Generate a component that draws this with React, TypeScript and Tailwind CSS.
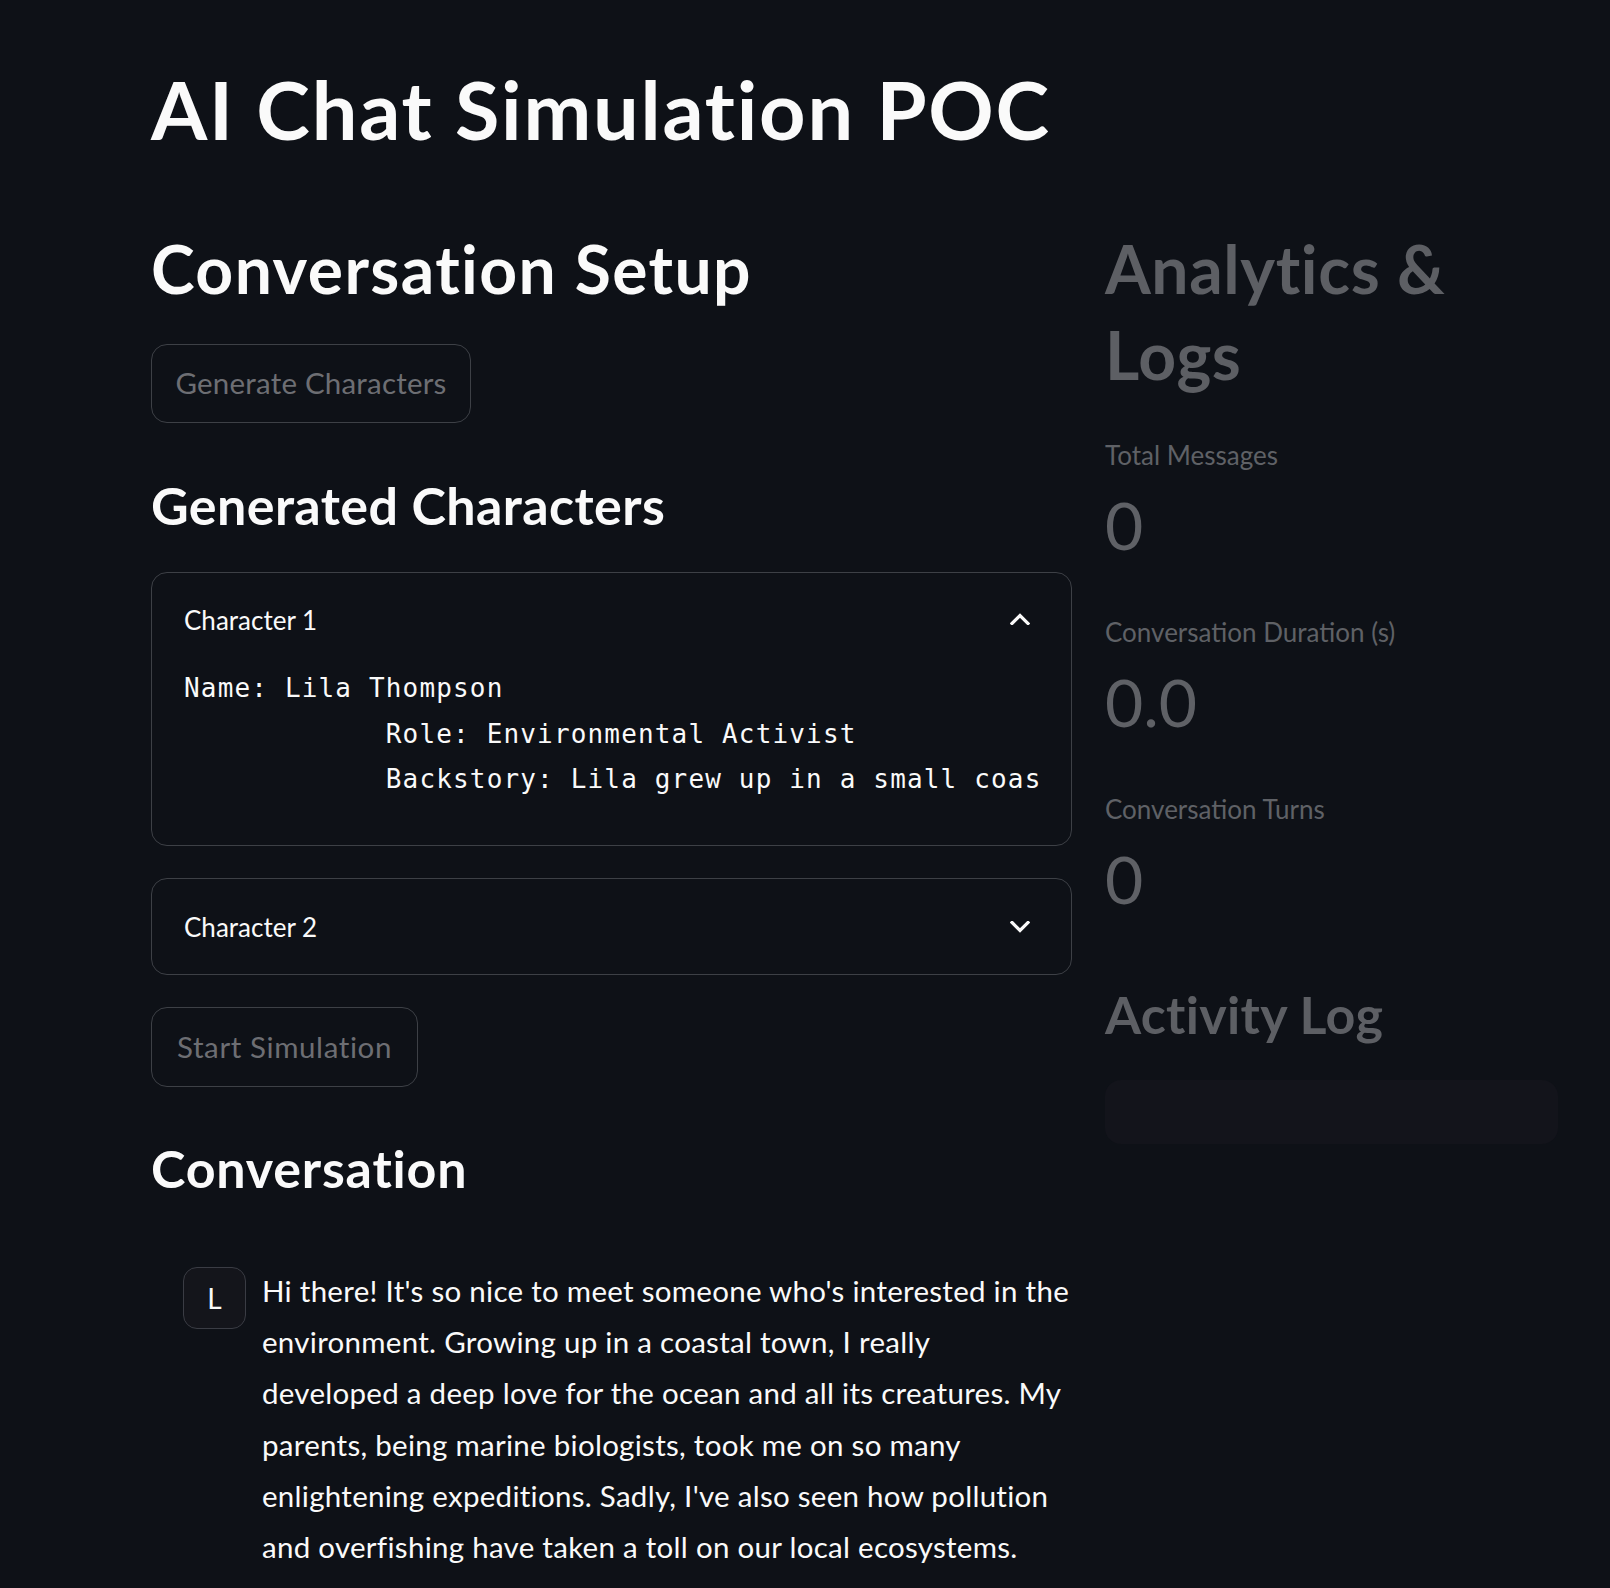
import React from "react";

const Chevron = ({ up }: { up: boolean }) => (
  <svg width="20" height="12" viewBox="0 0 20 12" fill="none" className="block">
    {up ? (
      <path d="M2 10.5 L10 2.5 L18 10.5" stroke="#fafafa" strokeWidth="3.2" strokeLinecap="square" strokeLinejoin="miter" />
    ) : (
      <path d="M2 1.5 L10 9.5 L18 1.5" stroke="#fafafa" strokeWidth="3.2" strokeLinecap="square" strokeLinejoin="miter" />
    )}
  </svg>
);

const chatLines = [
  "Hi there! It's so nice to meet someone who's interested in the",
  "environment. Growing up in a coastal town, I really",
  "developed a deep love for the ocean and all its creatures. My",
  "parents, being marine biologists, took me on so many",
  "enlightening expeditions. Sadly, I've also seen how pollution",
  "and overfishing have taken a toll on our local ecosystems.",
];

const Metric = ({ label, value, first }: { label: string; value: string; first?: boolean }) => (
  <div className={first ? "mt-[37px]" : "mt-[47px]"}>
    <div className="text-[26px] leading-[40px] text-[#5f6166]">{label}</div>
    <div className="mt-[10px] text-[66px] leading-[80px] text-[#5f6166]">{value}</div>
  </div>
);

export default function App() {
  return (
    <div className="h-[1588px] overflow-hidden bg-[#0e1117] font-['Lato',sans-serif] text-[#fafafa]">
      <div className="w-[1558px] pl-[151px] pt-[59px]">
        <h1 className="text-[81px] font-bold leading-[100px] tracking-[1.8px]">AI Chat Simulation POC</h1>
        <div className="mt-[67px] flex gap-[33px]">
          {/* Left column */}
          <div className="w-[921px] shrink-0">
            <h2 className="text-[66px] font-bold leading-[86px] tracking-[1.4px]">Conversation Setup</h2>
            <button className="mt-[32px] flex h-[79px] w-[320px] items-center justify-center rounded-[16px] border border-[#3d4046] text-[29.5px] tracking-[0.2px] text-[#6d6e73]">
              Generate Characters
            </button>
            <h3 className="mt-[48px] text-[52px] font-bold leading-[68px] tracking-[0.4px]">Generated Characters</h3>

            <div className="mt-[33px] h-[274px] rounded-[16px] border border-[#3d4046]">
              <div className="flex h-[92px] items-center justify-between pl-[32px] pr-[41px]">
                <span className="mt-[1px] text-[26px] leading-[40px]">Character 1</span>
                <Chevron up />
              </div>
              <div className="px-[32px]">
                <div className="mt-[1px] overflow-hidden whitespace-pre font-['DejaVu_Sans_Mono',monospace] text-[26px] leading-[45.5px] tracking-[1.16px]">
                  {"Name: Lila Thompson\n            Role: Environmental Activist\n            Backstory: Lila grew up in a small coastal town where her parents worked as marine biologists."}
                </div>
              </div>
            </div>

            <div className="mt-[32px] flex h-[97px] items-center justify-between rounded-[16px] border border-[#3d4046] pl-[32px] pr-[41px]">
              <span className="text-[26px] leading-[40px]">Character 2</span>
              <Chevron up={false} />
            </div>

            <button className="mt-[32px] flex h-[80px] w-[267px] items-center justify-center rounded-[16px] border border-[#3d4046] text-[29.5px] tracking-[0.6px] text-[#6d6e73]">
              Start Simulation
            </button>

            <h3 className="mt-[47px] text-[52px] font-bold leading-[68px] tracking-[0.8px]">Conversation</h3>

            <div className="mt-[31px] flex gap-[16px] py-[32px] pl-[32px]">
              <div className="mt-[2px] flex h-[62px] w-[63px] shrink-0 items-center justify-center rounded-[14px] border border-[#3a3c44] bg-[#14151b] text-[28px]">
                L
              </div>
              <div className="text-[29.5px] leading-[51.2px] tracking-[0.28px]">
                {chatLines.map((l) => (
                  <div key={l} className="whitespace-nowrap">{l}</div>
                ))}
              </div>
            </div>
          </div>

          {/* Right column */}
          <div className="w-[453px] shrink-0">
            <h2 className="text-[66px] font-bold leading-[86px] tracking-[0.6px] text-[#5d5f64]">
              Analytics &amp;
              <br />
              Logs
            </h2>
            <Metric label="Total Messages" value="0" first />
            <Metric label="Conversation Duration (s)" value="0.0" />
            <Metric label="Conversation Turns" value="0" />
            <h3 className="mt-[61px] text-[52px] font-bold leading-[68px] tracking-[0.3px] text-[#5d5f64]">Activity Log</h3>
            <div className="mt-[32px] h-[64px] rounded-[16px] bg-[#13141b]" />
          </div>
        </div>
      </div>
    </div>
  );
}
